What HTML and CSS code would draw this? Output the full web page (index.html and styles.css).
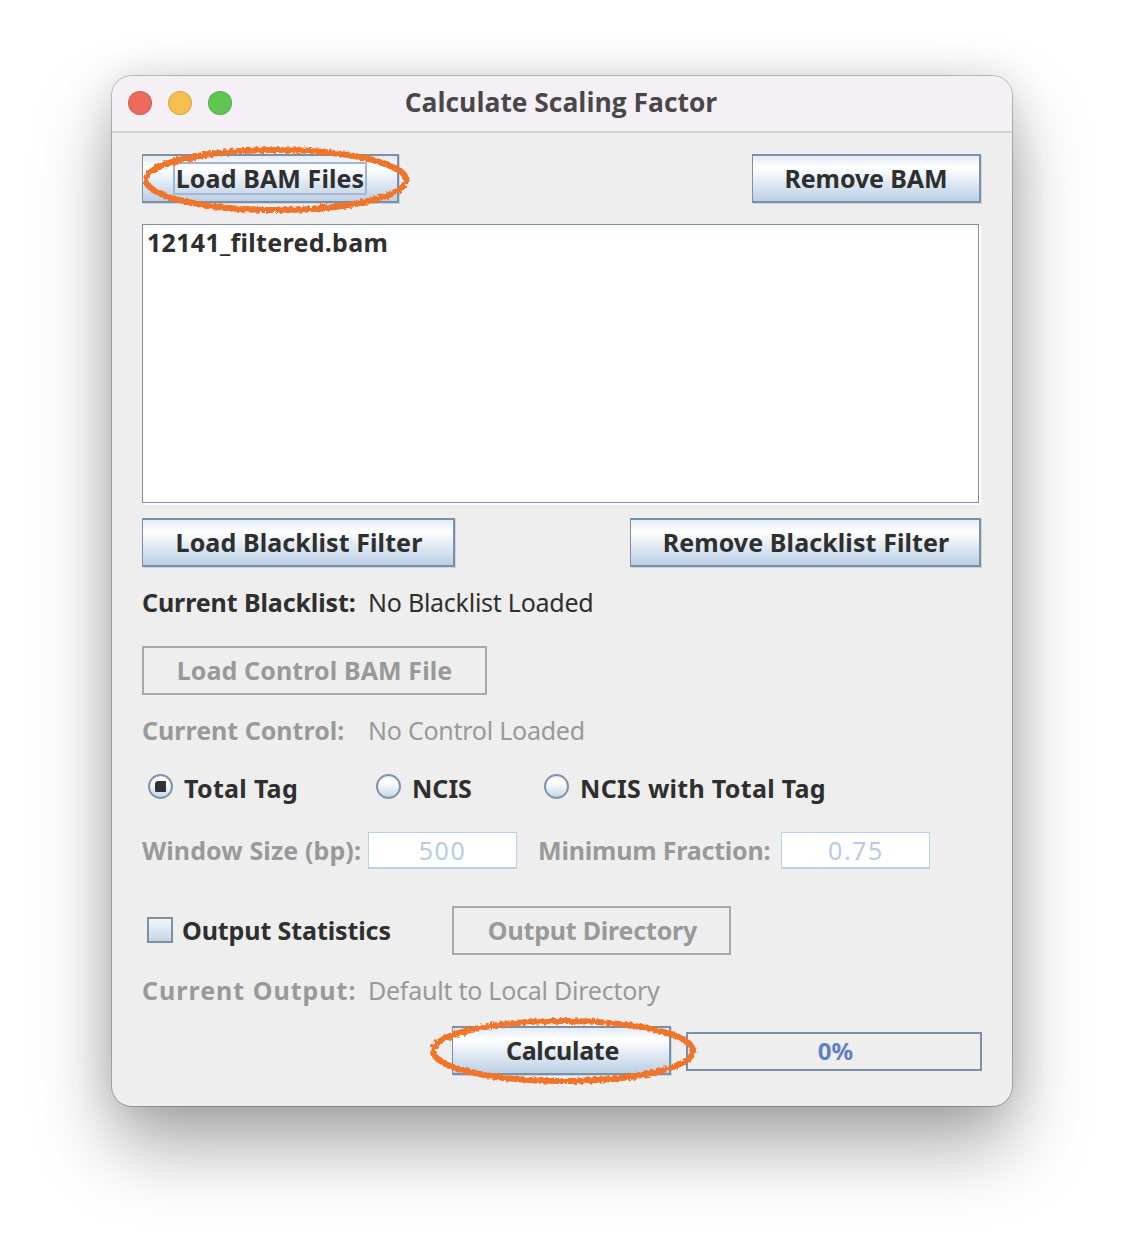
FILE: index.html
```html
<!DOCTYPE html>
<html lang="en">
<head>
  <meta charset="UTF-8">
  <title>Calculate Scaling Factor</title>
  <link rel="stylesheet" href="styles.css">
</head>
<body>
<div class="window">
  <div class="titlebar">
    <span class="light red"></span>
    <span class="light yellow"></span>
    <span class="light green"></span>
    <div class="title">Calculate Scaling Factor</div>
  </div>
  <div class="content">
    <div class="row between">
      <button class="btn focused w-load"><span class="focus-box">Load BAM Files</span></button>
      <button class="btn w-remove">Remove BAM</button>
    </div>
    <div class="filelist">12141_filtered.bam</div>
    <div class="row between row-black">
      <button class="btn w-black">Load Blacklist Filter</button>
      <button class="btn w-rblack">Remove Blacklist Filter</button>
    </div>
    <div class="status status-black"><b>Current Blacklist:</b><span>No Blacklist Loaded</span></div>
    <button class="btn disabled w-control">Load Control BAM File</button>
    <div class="status status-control disabled-text"><b>Current Control:</b><span>No Control Loaded</span></div>
    <div class="row radios">
      <label class="radio r1"><i class="dot checked"></i>Total Tag</label>
      <label class="radio r2"><i class="dot"></i>NCIS</label>
      <label class="radio"><i class="dot"></i>NCIS with Total Tag</label>
    </div>
    <div class="row fields disabled-text">
      <b>Window Size (bp):</b>
      <div class="field f1">500</div>
      <b class="min-label">Minimum Fraction:</b>
      <div class="field">0.75</div>
    </div>
    <div class="row output">
      <label class="check"><i class="box"></i>Output Statistics</label>
      <button class="btn disabled w-output">Output Directory</button>
    </div>
    <div class="status status-output disabled-text"><b>Current Output:</b><span>Default to Local Directory</span></div>
    <div class="row bottom">
      <button class="btn w-calc">Calculate</button>
      <div class="progress">0%</div>
    </div>
  </div>
</div>

<!-- hand drawn marks on top of the screenshot -->
<svg class="marks" width="1124" height="1254" viewBox="0 0 1124 1254">
  <defs>
    <filter id="rough" x="-5%" y="-20%" width="110%" height="140%">
      <feTurbulence type="fractalNoise" baseFrequency="0.3" numOctaves="3" seed="4"/>
      <feDisplacementMap in="SourceGraphic" scale="5"/>
    </filter>
  </defs>
  <g filter="url(#rough)" fill="none" stroke="#f0752a" stroke-width="6">
    <ellipse cx="276" cy="180" rx="130" ry="30"/>
    <ellipse cx="563" cy="1051" rx="130" ry="30"/>
  </g>
</svg>
</body>
</html>
```
FILE: styles.css
```css
body, html {
  margin: 0;
  height: 100%;
  background: #fff;
}
body {
  padding: 76px 112px 0;
  box-sizing: border-box;
  font-family: "Noto Sans", sans-serif;
  font-size: 25px;
  color: #2f2f2f;
}
.window {
  width: 900px;
  height: 1030px;
  border-radius: 20px;
  background: #eeeeee;
  box-shadow: 0 0 0 1px rgba(0, 0, 0, 0.22), 0 40px 76px rgba(0, 0, 0, 0.34), 0 0 40px rgba(0, 0, 0, 0.12);
  overflow: hidden;
}
.titlebar {
  height: 54px;
  display: flex;
  align-items: center;
  padding-left: 16px;
  padding-bottom: 1px;
  gap: 16px;
  background: #f4f0f5;
  border-bottom: 2px solid #d5d2d6;
  position: relative;
}
.light {
  width: 24px;
  height: 24px;
  border-radius: 50%;
  box-sizing: border-box;
  border: 1px solid rgba(0, 0, 0, 0.12);
}
.red { background: #ec6a5e; }
.yellow { background: #f4bf4f; }
.green { background: #61c554; }
.title {
  position: absolute;
  left: 0;
  right: 2px;
  top: 8px;
  text-align: center;
  font-family: "Open Sans", sans-serif;
  font-weight: 700;
  font-size: 26.4px;
  color: #4a474b;
}
.content {
  padding: 21px 31px 0 30px;
}
.row {
  display: flex;
  align-items: center;
}
.between { justify-content: space-between; }
.btn {
  display: block;
  flex: none;
  height: 49px;
  box-sizing: border-box;
  padding: 0 0 2px;
  border: 2px solid #7e8fa3;
  border-left-width: 1px;
  box-shadow: 1px 1px 0 #c5d5e8;
  background: linear-gradient(#e2ebf5 0%, #ffffff 26%, #e4ecf5 55%, #bbcfe5 100%);
  font-family: "Noto Sans", sans-serif;
  font-weight: 700;
  font-size: 25px;
  letter-spacing: 0.1px;
  color: #2f2f2f;
}
.btn.disabled {
  background: #eeeeee;
  border: 2px solid #a9a9a9;
  box-shadow: none;
  color: #999999;
}
.focus-box {
  display: inline-block;
  height: 33px;
  line-height: 29px;
  box-sizing: border-box;
  padding: 0 1px;
  border: 2px solid #a3b8d0;
}
.w-load { width: 257px; }
.w-remove { width: 229px; letter-spacing: -0.1px; }
.w-black { width: 313px; padding-left: 2px; }
.w-rblack { width: 351px; padding-left: 2px; }
.w-control { width: 345px; }
.w-output { width: 279px; letter-spacing: -0.2px; padding-left: 2px; }
.w-calc { width: 219px; letter-spacing: -0.3px; padding-left: 3px; }
.filelist {
  margin-top: 21px;
  width: 837px;
  height: 279px;
  box-sizing: border-box;
  padding: 0 4px;
  background: #fff;
  border: 1px solid #7e8fa3;
  box-shadow: 2px 2px 0 #fff;
  font-weight: 700;
  letter-spacing: 0.3px;
}
.row-black { margin-top: 15px; }
.status {
  display: flex;
  align-items: center;
  height: 34px;
  white-space: nowrap;
}
.status b { width: 226px; flex: none; }
.status span { letter-spacing: -0.25px; }
.status-black { margin-top: 18px; margin-bottom: 27px; }
.status-black b { letter-spacing: -0.1px; }
.status-control { margin-top: 18px; }
.status-output { margin-top: 18px; }
.status-output b { letter-spacing: 1px; }
.disabled-text { color: #999999; }
.radios {
  margin-top: 24px;
  height: 34px;
  padding-left: 6px;
  font-weight: 700;
  letter-spacing: 0.3px;
}
.radio {
  display: flex;
  align-items: center;
  gap: 11px;
}
.r1 { width: 228px; }
.r2 { width: 168px; }
.r2 { letter-spacing: 0; }
.dot {
  width: 25px;
  height: 25px;
  margin-top: -3px;
  box-sizing: border-box;
  border-radius: 50%;
  border: 2px solid #8093a8;
  background: linear-gradient(#eef3f9, #ffffff 30%, #c4d5e8);
  display: flex;
  align-items: center;
  justify-content: center;
}
.dot.checked::after {
  content: "";
  width: 11px;
  height: 11px;
  border-radius: 3px 1px 1px 1px;
  background: #333;
}
.fields {
  margin-top: 27px;
  height: 37px;
  white-space: nowrap;
}
.fields b { letter-spacing: 0.1px; padding-bottom: 2px; }
.field {
  width: 149px;
  height: 37px;
  flex: none;
  box-sizing: border-box;
  margin-left: 7px;
  border: 1px solid #b8d0e8;
  border-bottom-width: 2px;
  background: #fff;
  color: #b6cde4;
  text-align: center;
  letter-spacing: 1.5px;
  line-height: 35px;
}
.fields .min-label { margin-left: 21px; margin-right: 4px; letter-spacing: -0.2px; }
.output {
  margin-top: 37px;
  height: 49px;
}
.check {
  width: 310px;
  flex: none;
  display: flex;
  align-items: center;
  gap: 9px;
  padding-left: 5px;
  padding-bottom: 1px;
  box-sizing: border-box;
  font-weight: 700;
  letter-spacing: -0.1px;
}
.box {
  width: 26px;
  height: 26px;
  margin-top: -1px;
  box-sizing: border-box;
  border: 2px solid #7e8fa3;
  background: linear-gradient(#f4f7fb, #c4d5e8);
}
.bottom {
  margin-top: 19px;
  padding-left: 310px;
  gap: 15px;
}
.progress {
  width: 296px;
  height: 39px;
  flex: none;
  margin-top: 2px;
  padding-left: 3px;
  box-sizing: border-box;
  border: 2px solid #7e8fa3;
  text-align: center;
  line-height: 33px;
  font-weight: 700;
  font-size: 24px;
  color: #5f80c0;
}
.marks {
  position: absolute;
  left: 0;
  top: 0;
  pointer-events: none;
}
```
